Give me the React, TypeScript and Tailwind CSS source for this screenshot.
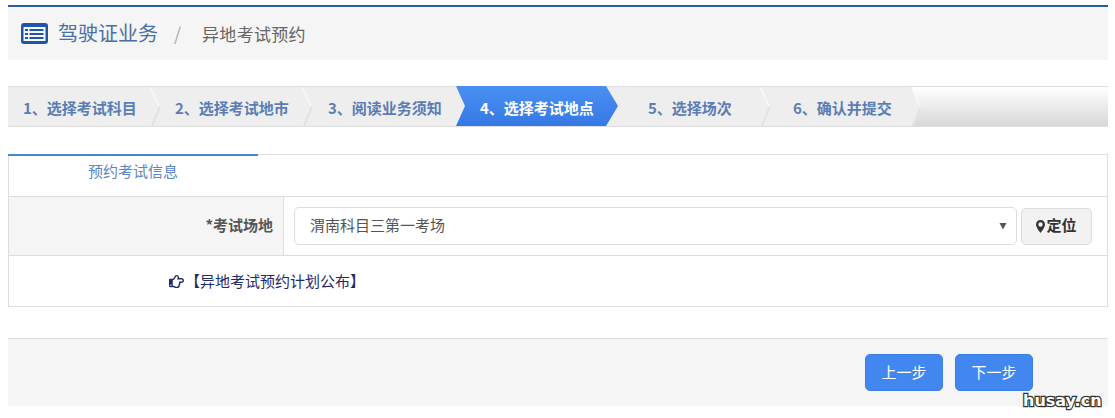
import React from "react";
import { FaRegHandPointRight } from "react-icons/fa";

function Sep() {
  return (
    <svg className="absolute left-full top-0 z-10" width="14" height="39" viewBox="0 0 14 39">
      <path d="M0 0 L9 19 L1 39 L0 39 Z" fill="#eeeeee" />
      <path d="M0 0 L9 19" fill="none" stroke="#f8f8f8" strokeWidth="1.5" />
      <path d="M9 19 L1 39 L3 39 L10 22 Z" fill="#e2e2e2" />
    </svg>
  );
}

const stepText = "relative flex items-center pt-[4px] bg-[#eeeeee] text-[15px] font-bold text-[#5b7db5]";

export default function App() {
  return (
    <div className="w-[1115px] h-[418px] bg-white relative overflow-hidden font-['Noto_Sans_CJK_SC',sans-serif] pt-[5px] px-2">
      <div className="w-[1100px]">
        <div className="h-[55px] bg-[#f5f5f5] border-t-2 border-[#2b5d9b] flex items-center pl-[13px] pb-[1px]">
          <svg width="27" height="21" viewBox="0 0 27 21" className="mr-[10px]">
            <rect x="0" y="0" width="27" height="21" rx="3" fill="#1f55a8" />
            <rect x="2.5" y="4" width="22" height="14" fill="#f5f7fb" />
            <g fill="#1f55a8">
              <rect x="4" y="6" width="3" height="2" />
              <rect x="8.5" y="6" width="14" height="2" />
              <rect x="4" y="10" width="3" height="2" />
              <rect x="8.5" y="10" width="14" height="2" />
              <rect x="4" y="14" width="3" height="2" />
              <rect x="8.5" y="14" width="14" height="2" />
            </g>
          </svg>
          <span className="text-[20px] text-[#4a6fa5] leading-none">驾驶证业务</span>
          <span className="text-[18px] text-[#aaaaaa] ml-[16px] mr-[21px] leading-none">/</span>
          <span className="text-[17px] tracking-[0.3px] text-[#666666] leading-none">异地考试预约</span>
        </div>

        <div className="mt-[26px] h-[41px] border-t border-b border-[#dddddd] flex bg-[#eeeeee]">
          <div className={`${stepText} w-[142px] pl-[15px]`}>1、选择考试科目<Sep /></div>
          <div className={`${stepText} w-[152px] pl-[25px]`}>2、选择考试地市<Sep /></div>
          <div className={`${stepText} w-[154px] pl-[26px]`}>3、阅读业务须知</div>
          <div className="relative z-20 h-[40px] w-[162px] -mt-[1px] flex items-center">
            <svg className="absolute inset-0" width="162" height="40" viewBox="0 0 162 40">
              <defs>
                <linearGradient id="blue" x1="0" y1="0" x2="0" y2="1">
                  <stop offset="0" stopColor="#4a90f2" />
                  <stop offset="1" stopColor="#3578e5" />
                </linearGradient>
              </defs>
              <path d="M0 0 H150 L162 20 L150 40 H0 L9 20 Z" fill="url(#blue)" />
            </svg>
            <span className="relative pl-[24px] pt-[4px] text-[15px] font-bold text-white">4、选择考试地点</span>
          </div>
          <div className={`${stepText} w-[142px] pl-[30px]`}>5、选择场次<Sep /></div>
          <div className={`${stepText} w-[151px] pl-[33px]`}>6、确认并提交<Sep /></div>
          <div className="flex-1 bg-gradient-to-b from-[#ffffff] to-[#d8d8d8]" />
        </div>

        <div className="mt-[27px] border border-[#dddddd] relative">
          <div className="h-[42px] border-b border-[#dddddd] relative">
            <div className="absolute left-[-1px] top-[-1px] w-[250px] h-[2px] bg-[#4a86cf]" />
            <div className="w-[250px] pl-[79px] pt-[6px] text-[15px] text-[#5b86c4] leading-[20px]">预约考试信息</div>
          </div>
          <div className="h-[59px] flex border-b border-[#dddddd]">
            <div className="w-[275px] bg-[#f5f5f5] border-r border-[#dddddd] flex items-center justify-end pr-[10px] pb-[2px] text-[15px] font-bold text-[#555555]">*考试场地</div>
            <div className="flex-1 flex items-center pl-[10px] pr-[15px] gap-[4px]">
              <div className="flex-1 h-[38px] border border-[#dddddd] rounded-[5px] bg-white flex items-center pl-[15px] pr-[9px] pb-[2px] justify-between text-[15px] text-[#555555]">
                <span>渭南科目三第一考场</span>
                <svg width="8" height="8" viewBox="0 0 8 8" className="mt-[2px]"><path d="M0.5 1 H7.5 L4 7.5 Z" fill="#555555" /></svg>
              </div>
              <div className="w-[71px] h-[37px] bg-[#f2f2f2] border border-[#dddddd] rounded-[5px] flex items-center justify-center pb-[2px] text-[15px] font-bold text-[#333333]">
                <svg width="9" height="13" viewBox="0 0 9 13" className="mr-[1px] mt-[2px]">
                  <path fillRule="evenodd" d="M4.5 0 C2 0 0 2 0 4.5 C0 7.5 4.5 13 4.5 13 C4.5 13 9 7.5 9 4.5 C9 2 7 0 4.5 0 Z M4.5 2.3 A2.2 2.2 0 1 1 4.5 6.7 A2.2 2.2 0 1 1 4.5 2.3 Z" fill="#333333" />
                </svg>
                定位
              </div>
            </div>
          </div>
          <div className="h-[50px] flex items-center pl-[160px] text-[15px] text-[#1f2a6b]">
            <FaRegHandPointRight className="w-[15px] h-[15px] mr-[1px]" />
            <span>【异地考试预约计划公布】</span>
          </div>
        </div>

        <div className="mt-[31px] h-[68px] bg-[#f5f5f5] border-t border-[#dddddd] flex justify-end items-start pt-[15px] pr-[75px] gap-[12px]">
          <div className="w-[78px] h-[37px] rounded-[5px] bg-[#4287f0] border border-[#3b7fe6] flex items-center justify-center text-[15px] text-white">上一步</div>
          <div className="w-[78px] h-[37px] rounded-[5px] bg-[#4287f0] border border-[#3b7fe6] flex items-center justify-center text-[15px] text-white">下一步</div>
        </div>
      </div>
      <div className="absolute left-[1023px] top-[389px] text-[16px] font-bold leading-[24px] text-white font-['DejaVu_Sans',sans-serif] [-webkit-text-stroke:2.5px_#333333] [paint-order:stroke_fill]">
        husay.cn
      </div>
    </div>
  );
}
